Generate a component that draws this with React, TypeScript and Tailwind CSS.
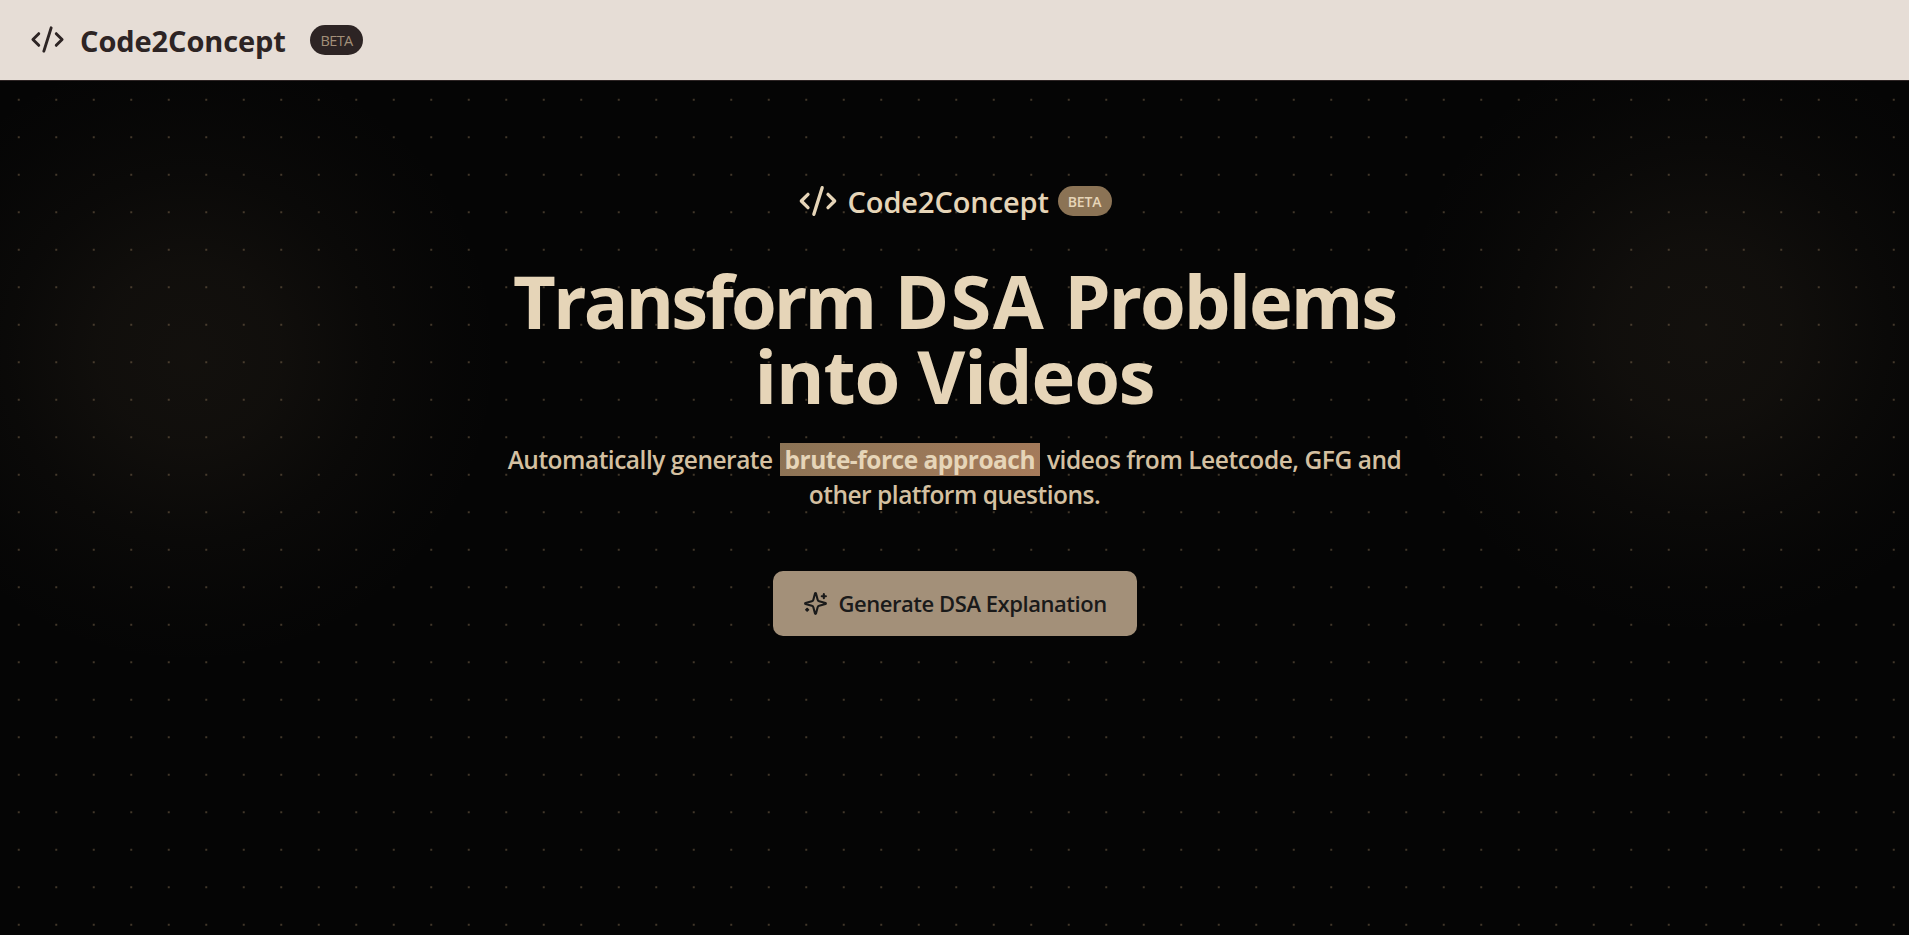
import { CodeXml } from "lucide-react";

function SparklesIcon() {
  return (
    <svg
      width="25"
      height="25"
      viewBox="0 0 24 24"
      fill="none"
      stroke="currentColor"
      strokeWidth="2"
      strokeLinecap="round"
      strokeLinejoin="round"
      className="shrink-0"
    >
      <path d="M9.937 15.5A2 2 0 0 0 8.5 14.063l-6.135-1.582a.5.5 0 0 1 0-.962L8.5 9.936A2 2 0 0 0 9.937 8.5l1.582-6.135a.5.5 0 0 1 .963 0L14.063 8.5A2 2 0 0 0 15.5 9.937l6.135 1.581a.5.5 0 0 1 0 .964L15.5 14.063a2 2 0 0 0-1.437 1.437l-1.582 6.135a.5.5 0 0 1-.963 0z" />
      <path d="M20 3v4" />
      <path d="M22 5h-4" />
      <path d="M4 17v2" />
      <path d="M5 18H3" />
    </svg>
  );
}

function Navbar() {
  return (
    <header className="flex h-[81px] shrink-0 items-center border-b border-[#2d2424] bg-[#e6ddd6] pl-[30px] text-[#2d2424]">
      <CodeXml size={35} strokeWidth={2} className="mb-px shrink-0" />
      <span className="ml-[15px] w-[206px] whitespace-nowrap pt-[2px] text-[29px] font-bold leading-[40px] tracking-[-0.1px]">
        Code2Concept
      </span>
      <span className="ml-6 flex h-[30px] w-[53px] items-center justify-center rounded-full bg-[#2d2424] pt-px text-[14.5px] tracking-[-0.6px] text-[#a39079]">
        BETA
      </span>
    </header>
  );
}

function Hero() {
  return (
    <main className="flex flex-1 flex-col items-center pt-[100px] bg-[#050505] [background-image:radial-gradient(circle,rgba(139,115,85,0.45)_0.9px,transparent_1.4px),radial-gradient(circle_at_190px_275px,rgba(139,115,85,0.1)_0px,rgba(139,115,85,0.085)_90px,rgba(139,115,85,0.04)_180px,rgba(139,115,85,0.01)_260px,transparent_310px),radial-gradient(circle_at_1702px_252px,rgba(139,115,85,0.1)_0px,rgba(139,115,85,0.085)_90px,rgba(139,115,85,0.04)_180px,rgba(139,115,85,0.01)_250px,transparent_305px)] [background-size:37.5px_37.5px,100%_100%,100%_100%]">
      <div className="flex h-10 items-center text-[#e6d5b8]">
        <CodeXml size={40} strokeWidth={2} className="shrink-0" />
        <span className="ml-[10px] w-[200px] whitespace-nowrap pt-[2px] text-[29px] font-semibold leading-[40px] tracking-[-0.1px]">
          Code2Concept
        </span>
        <span className="ml-[10px] flex h-[30px] w-[54px] items-center justify-center rounded-full bg-[#8b7355] text-[14px] font-semibold tracking-[-0.2px]">
          BETA
        </span>
      </div>
      <h1 className="mt-[42px] text-center text-[74px] font-bold leading-[75px] text-[#e6d5b8]">
        <span className="block whitespace-nowrap">
          <span className="tracking-[-2.9px]">Transform</span>{" "}
          <span className="ml-px tracking-[1.3px]">DSA</span>{" "}
          <span className="tracking-[-2.1px]">Problems</span>
        </span>
        <span className="block whitespace-nowrap tracking-[-1.1px]">into Videos</span>
      </h1>
      <p className="mt-[29px] text-center text-[24.5px] font-semibold leading-[35px] tracking-[-0.5px] text-[#d4c0a1]">
        <span className="block whitespace-nowrap">
          Automatically generate{" "}
          <span className="ml-px bg-linear-135 from-[#8b7355] to-[#a67b5b] px-[5px] font-bold text-[#e6d5b8]">
            brute-force approach
          </span>{" "}
          <span className="ml-px tracking-[-0.45px]">videos from Leetcode, GFG and</span>
        </span>
        <span className="block whitespace-nowrap">other platform questions.</span>
      </p>
      <button className="mt-[59px] flex h-[65px] w-[364px] items-center rounded-[10px] bg-[#a39079] pl-[30px] text-[#1a1a1a]">
        <SparklesIcon />
        <span className="ml-[11px] whitespace-nowrap text-[22px] font-semibold tracking-[-0.45px]">
          Generate DSA Explanation
        </span>
      </button>
    </main>
  );
}

export default function App() {
  return (
    <div className="flex h-[935px] flex-col overflow-hidden bg-[#050505] font-['Open_Sans','Noto_Sans',sans-serif]">
      <Navbar />
      <Hero />
    </div>
  );
}
